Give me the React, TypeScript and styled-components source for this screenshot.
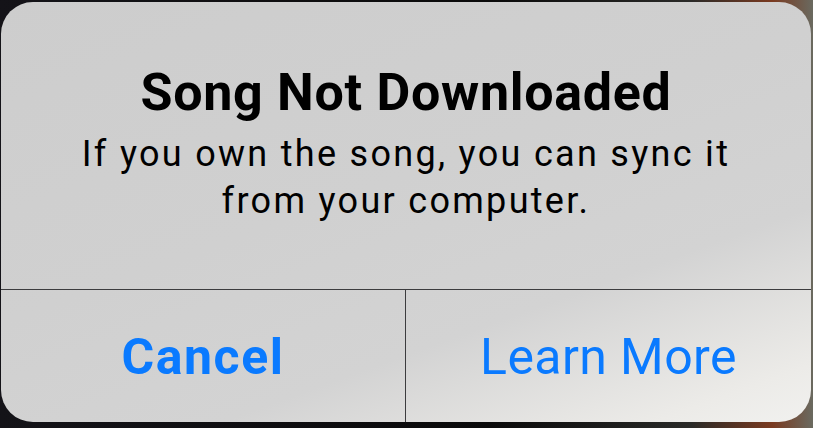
import React from "react";
import styled, { createGlobalStyle } from "styled-components";

const Global = createGlobalStyle`
  html, body { margin: 0; padding: 0; background: #0b0b0d; }
  body { width: 813px; height: 428px; overflow: hidden; }
`;

const Backdrop = styled.div`
  width: 813px;
  height: 428px;
  padding: 2px 2px 6px 1px;
  box-sizing: border-box;
  background: linear-gradient(90deg, #141318 0%, #0a0a0a 60%, #2a2a28 85%, #7a3a20 95%, #6a6a60 100%);
`;

const Dialog = styled.div`
  width: 810px;
  height: 420px;
  border-radius: 32px;
  overflow: hidden;
  display: flex;
  flex-direction: column;
  background: linear-gradient(160deg, #cdcdcd 0%, #d0d0d0 45%, #d3d3d3 70%, #ecebe8 92%, #f1f1ef 100%);
  font-family: Roboto, "Liberation Sans", sans-serif;
`;

const Content = styled.div`
  height: 288px;
  display: flex;
  flex-direction: column;
  align-items: center;
  border-bottom: 1px solid #3c3c3e;
  box-sizing: border-box;
  padding-top: 61px;
`;

const Title = styled.div`
  font-size: 52px;
  font-weight: 700;
  color: #000;
  line-height: 60px;
  letter-spacing: 0.7px;
`;

const Message = styled.div`
  margin-top: 8px;
  font-size: 36px;
  color: #000;
  line-height: 47px;
  text-align: center;
  letter-spacing: 2.3px;
`;

const Actions = styled.div`
  flex: 1;
  display: grid;
  grid-template-columns: 405px 1fr;
`;

const Action = styled.div<{ $bold?: boolean; $divider?: boolean }>`
  display: flex;
  align-items: center;
  justify-content: center;
  padding-top: 2px;
  font-size: 50px;
  font-weight: ${(p) => (p.$bold ? 700 : 400)};
  letter-spacing: ${(p) => (p.$bold ? "1.5px" : "0.4px")};
  color: #0a7aff;
  border-right: ${(p) => (p.$divider ? "1px solid #3c3c3e" : "none")};
`;

export default function App() {
  return (
    <>
      <Global />
      <Backdrop>
        <Dialog>
          <Content>
            <Title>Song Not Downloaded</Title>
            <Message>
              If you own the song, you can sync it
              <br />
              from your computer.
            </Message>
          </Content>
          <Actions>
            <Action $bold $divider>Cancel</Action>
            <Action>Learn More</Action>
          </Actions>
        </Dialog>
      </Backdrop>
    </>
  );
}
